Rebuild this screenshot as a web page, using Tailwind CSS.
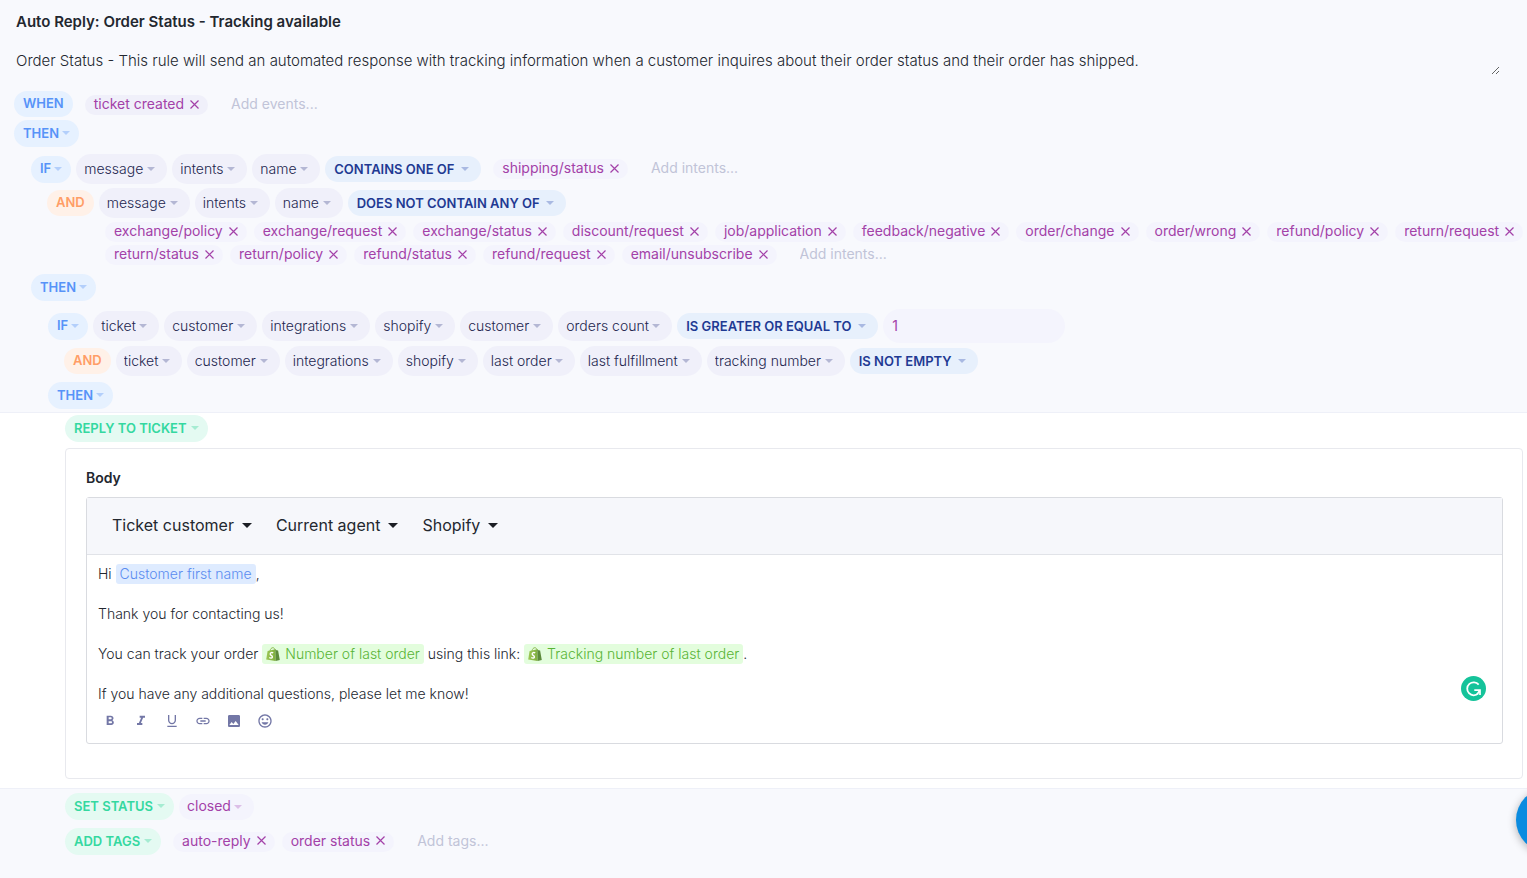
<!DOCTYPE html>
<html lang="en">
<head>
<meta charset="utf-8">
<meta name="viewport" content="width=device-width, initial-scale=1">
<title>Auto Reply: Order Status - Tracking available</title>
<script src="https://cdn.jsdelivr.net/npm/@tailwindcss/browser@4"></script>
</head>
<body class="relative min-h-screen overflow-x-hidden bg-[#f8f9fd] font-['Inter',sans-serif] text-sm text-[#23272f]">

<svg class="absolute size-0" aria-hidden="true">
  <defs>
    <linearGradient id="bagfill" x1="0" x2="1"><stop offset="0" stop-color="#9cc654"/><stop offset="1" stop-color="#7fae40"/></linearGradient>
    <symbol id="bag" viewBox="0 0 14 14">
      <path d="M4 4C4.300 1.800 5.600.7 6.900.7s2.100 1.300 2.400 3" fill="none" stroke="#86b548" stroke-width=".9"/>
      <path d="M1.600 3.900 9.300 2.200 9.600 14 .2 12.400z" fill="url(#bagfill)"/>
      <path d="M9.300 2.200 10.500 3.200 12.100 3.400 13.800 12.900 9.600 14z" fill="#5c8a3a"/>
      <path d="M7.200 5.900C6 5.200 4.200 5.500 4.200 6.900c0 1.600 2.200 1.500 2.200 3 0 1.400-1.800 1.500-3.100.6" fill="none" stroke="#fff" stroke-width="1.400"/>
    </symbol>
  </defs>
</svg>

<main>
  <header class="flex flex-col pl-4 pr-[27px]">
    <input aria-label="Rule name" class="mt-[7px] h-7 w-full bg-transparent text-[15px] font-semibold outline-none" value="Auto Reply: Order Status - Tracking available">
    <textarea aria-label="Rule description" rows="1" class="mt-3 h-7 w-full resize overflow-hidden bg-transparent pt-1 text-[15px] font-light leading-5 outline-none">Order Status - This rule will send an automated response with tracking information when a customer inquires about their order status and their order has shipped.</textarea>
  </header>

  <section class="flex flex-col border-b border-[#eef0f8] pb-[3px] pt-4" aria-label="Conditions">
    <div class="flex h-[26px] items-center pl-[14px]">
      <span class="flex h-[26px] items-center rounded-full bg-[#e6f1ff] px-[9px] pb-px text-[13px] font-semibold text-[#5793f8]">WHEN</span>
      <div class="ml-3 flex items-center pt-[2px]" data-tags="ticket created" data-tone="dark" data-add="Add events..."></div>
    </div>
    <div class="mt-[3px] flex pl-[14px]" data-key="THEN"></div>

    <div class="mt-[7px] flex h-[30px] items-center gap-[5px] pl-[31px]">
      <span class="flex" data-key="IF"></span>
      <span class="flex gap-[5px]" data-path="message|intents|name"></span>
      <span class="flex" data-op="CONTAINS ONE OF"></span>
      <div class="ml-[7px] flex items-center" data-tags="shipping/status" data-add="Add intents..."></div>
    </div>
    <div class="mt-1 flex h-[30px] items-center gap-[5px] pl-[47px]">
      <span class="flex h-[26px] items-center rounded-full bg-[#fff1e8] px-[9px] pb-px text-[13px] font-semibold text-[#ff9d66]">AND</span>
      <span class="flex gap-[5px]" data-path="message|intents|name"></span>
      <span class="flex" data-op="DOES NOT CONTAIN ANY OF"></span>
    </div>
    <div class="-mr-3 mt-1 flex flex-wrap items-center gap-y-[3px] pl-[105px]" data-tags="exchange/policy|exchange/request|exchange/status|discount/request|job/application|feedback/negative|order/change|order/wrong|refund/policy|return/request|return/status|return/policy|refund/status|refund/request|email/unsubscribe" data-add="Add intents..."></div>
    <div class="mt-[9px] flex pl-[31px]" data-key="THEN"></div>

    <div class="mt-2 flex h-[34px] items-center gap-[5px] pl-12">
      <span class="flex" data-key="IF"></span>
      <span class="flex gap-[5px]" data-path="ticket|customer|integrations|shopify|customer|orders count"></span>
      <span class="flex" data-op="IS GREATER OR EQUAL TO"></span>
      <input aria-label="Orders count value" value="1" class="h-[34px] w-[182px] rounded-full bg-[#f4f4fd] px-[9px] pb-[2px] text-[#a341a8] outline-none">
    </div>
    <div class="mt-[3px] flex h-[30px] items-center gap-[5px] pl-16">
      <span class="flex h-[26px] items-center rounded-full bg-[#fff1e8] px-[9px] pb-px text-[13px] font-semibold text-[#ff9d66]">AND</span>
      <span class="flex gap-[5px]" data-path="ticket|customer|integrations|shopify|last order|last fulfillment|tracking number"></span>
      <span class="flex" data-op="IS NOT EMPTY"></span>
    </div>
    <div class="mt-[6px] flex pl-12" data-key="THEN"></div>
  </section>

  <section class="flex flex-col border-b border-[#eef0f8] bg-white pb-[9px] pl-[65px] pr-1 pt-[2px]" aria-label="Reply action">
    <div class="flex" data-action="REPLY TO TICKET"></div>
    <div class="mt-[6px] rounded border border-[#e8e9ee] pb-[34px] pl-5 pr-[19px] pt-[19px]">
      <h2 id="body-label" class="font-semibold leading-5">Body</h2>
      <div class="relative mt-[9px] rounded-[3px] border border-[#d9dbe0]">
        <div class="flex h-[57px] items-center gap-6 border-b border-[#e1e3e8] bg-[#f6f7fb] pb-[2px] pl-[25px] text-base">
          <button type="button" class="flex items-center gap-2">Ticket customer<svg class="h-[5px] w-[10px]" viewBox="0 0 10 5"><path d="M0 0h10L5 5z" fill="#1b1e24"/></svg></button>
          <button type="button" class="flex items-center gap-2">Current agent<svg class="h-[5px] w-[10px]" viewBox="0 0 10 5"><path d="M0 0h10L5 5z" fill="#1b1e24"/></svg></button>
          <button type="button" class="flex items-center gap-2">Shopify<svg class="h-[5px] w-[10px]" viewBox="0 0 10 5"><path d="M0 0h10L5 5z" fill="#1b1e24"/></svg></button>
        </div>
        <div role="textbox" aria-multiline="true" aria-labelledby="body-label" contenteditable="true" spellcheck="false" class="flex flex-col gap-5 px-[11px] pt-[9px] font-light leading-5 outline-none">
          <p>Hi <span class="inline-block rounded-[3px] bg-[#deebff] px-1 text-[#5b8cf0]">Customer first name</span>,</p>
          <p>Thank you for contacting us!</p>
          <p>You can track your order <span class="inline-block rounded-[3px] bg-[#e3fddd] px-1 text-[#58b435]"><svg class="mr-[5px] inline size-[14px] align-[-2px]" aria-hidden="true"><use href="#bag"/></svg>Number of last order</span> using this link: <span class="inline-block rounded-[3px] bg-[#e3fddd] px-1 text-[#58b435]"><svg class="mr-[5px] inline size-[14px] align-[-2px]" aria-hidden="true"><use href="#bag"/></svg>Tracking number of last order</span>.</p>
          <p>If you have any additional questions, please let me know!</p>
        </div>
        <div class="flex items-center gap-[15px] pb-[14px] pl-[15px] pt-[9px] text-[#7377a6]">
          <button type="button" aria-label="Bold" class="size-4"><svg viewBox="0 0 24 24" fill="currentColor"><path d="M15.600 10.790c.97-.67 1.650-1.770 1.650-2.790 0-2.260-1.750-4-4-4H7v14h7.040c2.090 0 3.710-1.700 3.710-3.790 0-1.520-.86-2.820-2.150-3.420zM10 6.500h3c.83 0 1.500.67 1.500 1.500s-.67 1.500-1.500 1.500h-3v-3zm3.500 9H10v-3h3.500c.83 0 1.500.67 1.500 1.500s-.67 1.500-1.500 1.500z"/></svg></button>
          <button type="button" aria-label="Italic" class="size-4"><svg viewBox="0 0 24 24" fill="currentColor"><path d="M10 4v3h2.210l-3.420 8H6v3h8v-3h-2.210l3.420-8H18V4z"/></svg></button>
          <button type="button" aria-label="Underline" class="size-4"><svg viewBox="0 0 24 24" fill="currentColor"><path d="M12 17c3.310 0 6-2.690 6-6V3h-2v8c0 2.210-1.790 4-4 4s-4-1.790-4-4V3H6v8c0 3.310 2.690 6 6 6zm-7 2.300v1.700h14v-1.700H5z"/></svg></button>
          <button type="button" aria-label="Insert link" class="size-4"><svg viewBox="0 0 24 24" fill="currentColor"><path d="M3.900 12c0-1.710 1.390-3.100 3.100-3.100h4V7H7c-2.760 0-5 2.240-5 5s2.240 5 5 5h4v-1.900H7c-1.710 0-3.100-1.390-3.100-3.100zM8 13h8v-2H8v2zm9-6h-4v1.900h4c1.710 0 3.100 1.390 3.100 3.100s-1.390 3.100-3.100 3.100h-4V17h4c2.760 0 5-2.240 5-5s-2.240-5-5-5z"/></svg></button>
          <button type="button" aria-label="Insert image" class="size-4"><svg viewBox="0 0 24 24" fill="currentColor"><path d="M21 19V5c0-1.100-.9-2-2-2H5c-1.100 0-2 .9-2 2v14c0 1.100.9 2 2 2h14c1.100 0 2-.9 2-2zM5 18l3.500-4.500 2.500 3.010L14.500 12l4.500 6H5z"/></svg></button>
          <button type="button" aria-label="Insert emoji" class="size-4"><svg viewBox="0 0 24 24" fill="currentColor"><path d="M11.990 2C6.470 2 2 6.480 2 12s4.470 10 9.990 10C17.520 22 22 17.520 22 12S17.520 2 11.990 2zM12 20c-4.420 0-8-3.580-8-8s3.580-8 8-8 8 3.580 8 8-3.580 8-8 8zm3.500-9c.83 0 1.500-.67 1.500-1.500S16.330 8 15.500 8 14 8.670 14 9.500s.67 1.500 1.500 1.500zm-7 0c.83 0 1.500-.67 1.500-1.500S9.330 8 8.500 8 7 8.670 7 9.500 7.670 11 8.500 11zm3.500 6.500c2.330 0 4.310-1.460 5.110-3.500H6.890c.8 2.040 2.780 3.500 5.110 3.500z"/></svg></button>
        </div>
        <button type="button" aria-label="Grammar check" class="absolute bottom-[42px] right-4 size-[25px]">
          <svg viewBox="0 0 25 25"><circle cx="12.500" cy="12.500" r="12.500" fill="#15c39a"/><path d="M17.700 8.600A6.500 6.500 0 1 0 17.300 17.400" fill="none" stroke="#fff" stroke-width="1.800"/><path d="M13.300 14.200h5.700v4.900M18.700 14.400l-2.600 4" fill="none" stroke="#fff" stroke-width="1.700"/></svg>
        </button>
      </div>
    </div>
  </section>

  <section class="flex flex-col pb-5 pl-[65px] pt-1" aria-label="Other actions">
    <div class="flex items-center gap-[5px]">
      <span class="flex" data-action="SET STATUS"></span>
      <span class="flex" data-value="closed"></span>
    </div>
    <div class="mt-2 flex items-center">
      <span class="flex" data-action="ADD TAGS"></span>
      <div class="ml-3 flex items-center" data-tags="auto-reply|order status" data-add="Add tags..."></div>
    </div>
  </section>
</main>

<button type="button" aria-label="Open chat" class="fixed bottom-[26px] -right-[53px] size-16 rounded-full bg-[#0a8be0] shadow-[0_2px_8px_rgba(0,0,0,0.3)]"></button>

<script>
  const caret = '<svg class="h-1 w-2" viewBox="0 0 8 4"><path d="M0 0h8L4 4z" fill="currentColor"/></svg>';
  const fill = (name, fn) => document.querySelectorAll('[data-' + name + ']').forEach(el => {
    el.innerHTML = el.dataset[name].split('|').map(t => fn(t, el)).join('');
  });
  fill('key', t => `<button type="button" class="flex h-[27px] items-center gap-[3px] rounded-full bg-[#e6f1ff] px-[9px] pb-px text-[13px] font-semibold text-[#5793f8]">${t}<span class="text-[#b3cffb]">${caret}</span></button>`);
  fill('action', t => `<button type="button" class="flex h-[27px] items-center gap-1 rounded-full bg-[#e4faf2] px-[9px] pb-px text-[13px] font-semibold text-[#34d8a0]">${t}<span class="text-[#a5ecd2]">${caret}</span></button>`);
  const select = (t, box, sel, tone) => `<span class="relative flex items-center ${box}"><select aria-label="${t}" class="${sel}"><option>${t}</option></select><span class="pointer-events-none absolute right-3 ${tone}">${caret}</span></span>`;
  fill('path', t => select(t, 'h-[30px] rounded-full bg-[#f0f0fa]', 'h-full appearance-none bg-transparent pb-px pl-2 pr-[23px] font-light text-[#23264f] outline-none', 'text-[#b4b7d4]'));
  fill('op', t => select(t, 'h-[26px] rounded-full bg-[#e7f0fc]', 'h-full appearance-none bg-transparent pl-[9px] pr-[26px] text-[13px] font-semibold text-[#1f3a93] outline-none', 'text-[#a9b9e2]'));
  fill('value', t => select(t, 'h-[26px] rounded-full bg-[#f4f4fd]', 'h-full appearance-none bg-transparent pb-[2px] pl-2 pr-[23px] text-[#a341a8] outline-none', 'text-[#dcbfe8]'));
  fill('tags', (t, el) => `<span class="mr-[7px] flex h-5 items-center gap-[6px] rounded-full pb-[2px] pl-[9px] pr-[9px] text-[#a341a8] ${el.dataset.tone ? 'bg-[#f0f0fa]' : 'bg-[#f4f4fd]'}">${t}<button type="button" aria-label="Remove ${t}" class="size-[9px]"><svg viewBox="0 0 9 9"><path d="M.5.5l8 8M8.500.5l-8 8" stroke="currentColor" stroke-width="1.200"/></svg></button></span>`);
  document.querySelectorAll('[data-add]').forEach(el => el.insertAdjacentHTML('beforeend',
    `<input aria-label="${el.dataset.add}" placeholder="${el.dataset.add}" class="ml-4 h-5 w-[120px] bg-transparent pb-[2px] outline-none placeholder:text-[#c1c4d8]">`));
</script>
</body>
</html>
